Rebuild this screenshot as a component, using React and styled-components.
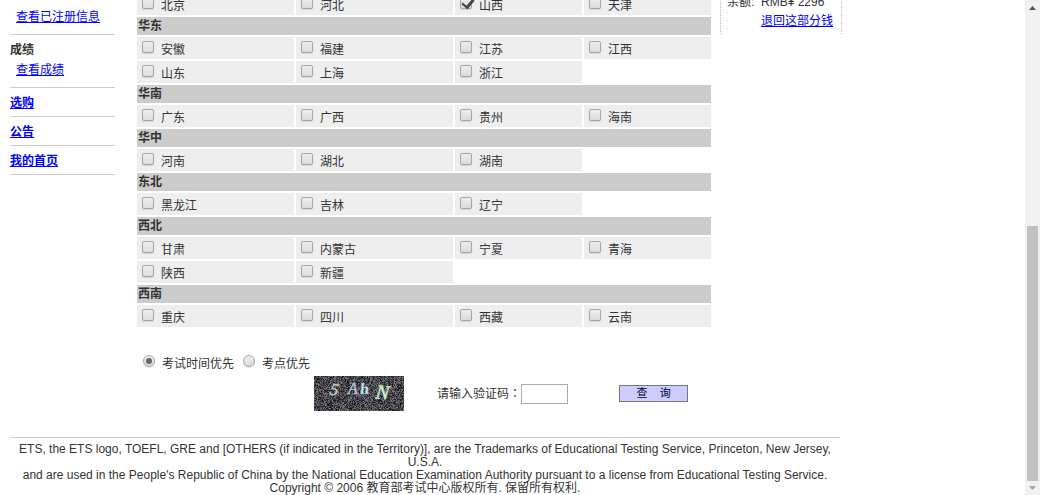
import React from "react";
import styled, { createGlobalStyle } from "styled-components";

const GlobalStyle = createGlobalStyle`
  * { box-sizing: border-box; }
  body {
    margin: 0;
    background: #fff;
    color: #333;
    font: 12px/20px "Liberation Sans", "Noto Sans CJK SC", sans-serif;
  }
  a { color: #00f; text-decoration: underline; }
`;

const Screen = styled.div`
  display: flex;
  height: 100vh;
  overflow: hidden;
`;

const Viewport = styled.div`
  flex: 1;
  min-width: 0;
  overflow: hidden;
`;

const Page = styled.div`
  max-width: 842px;
  margin-top: -9px;
  padding-left: 10px;
`;

const Columns = styled.div`
  display: grid;
  grid-template-columns: 105px minmax(0, 1fr) 122px;
`;

const Sidebar = styled.nav`
  padding-top: 11px;
`;

const MenuGroup = styled.div`
  padding: 5px 0 7px;
  border-bottom: 1px solid #ccc;
`;

const MenuTitle = styled.div`
  font-weight: bold;
`;

const SubLink = styled.a`
  display: block;
  padding-left: 6px;
`;

const MenuItem = styled.div`
  padding: 5px 0 3px;
  border-bottom: 1px solid #ccc;
  font-weight: bold;
`;

const Main = styled.main`
  margin: 0 7px 0 20px;
`;

const Regions = styled.table`
  width: 100%;
  table-layout: fixed;
  border-spacing: 2px;
`;

const Column = styled.col`
  width: ${(p) => (p.$narrow ? "127px" : "auto")};
`;

const RegionHead = styled.th`
  height: 18px;
  padding: 0 1px;
  background: #ccc;
  text-align: left;
  line-height: 18px;
`;

const City = styled.td`
  height: 22px;
  padding: 0;
  background: #eee;
`;

const Choice = styled.label`
  display: inline-flex;
  align-items: flex-start;
  height: 22px;
  line-height: 26px;
`;

const Tick = styled.input`
  appearance: none;
  position: relative;
  flex: none;
  width: 12px;
  height: 12px;
  margin: 4px 7px 0 5px;
  border: 1px solid #a6a6a6;
  border-radius: ${(p) => (p.type === "radio" ? "50%" : "2px")};
  background: linear-gradient(#eee, #dcdcdc);
  box-shadow: 0 1px 1px rgba(0, 0, 0, 0.12);

  &[type="radio"]:checked::after {
    content: "";
    position: absolute;
    inset: 2px;
    border-radius: 50%;
    background: #666;
  }
  &[type="checkbox"]:checked::after {
    content: "";
    position: absolute;
    left: 3px;
    top: -1px;
    width: 5px;
    height: 9px;
    border: solid #444;
    border-width: 0 3px 2px 0;
    transform: rotate(40deg);
  }
`;

const Search = styled.form`
  padding-top: 22px;
`;

const Priority = styled.div`
  display: flex;
  gap: 4px;
  padding-left: 3px;
`;

const CodeRow = styled.div`
  display: flex;
  align-items: center;
  margin-top: 3px;
  padding-left: 179px;
`;

const CaptchaImage = styled.svg`
  flex: none;
  width: 90px;
  height: 35px;
  margin-right: 33px;
`;

const CodeLabel = styled.label`
  white-space: nowrap;
`;

const CenteredColon = styled.span`
  font-family: "Noto Sans CJK TC", sans-serif;
`;

const CodeInput = styled.input`
  width: 47px;
  height: 20px;
  padding: 0 2px;
  border: 1px solid #a9a9a9;
  background: #fff;
  font: inherit;
`;

const SubmitButton = styled.button`
  width: 69px;
  height: 17px;
  margin-left: 51px;
  padding: 0;
  border: 1px solid #777;
  background: #ccf;
  color: #003;
  font: 11px/15px "Liberation Sans", "Noto Sans CJK SC", sans-serif;
  white-space: pre;
`;

const Account = styled.dl`
  display: grid;
  grid-template-columns: 34px 1fr;
  align-self: start;
  margin: 0;
  padding: 2px 0 3px 6px;
  border: dotted #bbb;
  border-width: 0 1px;
  line-height: 19px;
`;

const AccountCell = styled.dd`
  margin: 0;
  grid-column: 2;
`;

const Footer = styled.footer`
  margin: 26px 2px 0 0;
  padding-top: 5px;
  border-top: 1px solid #ccc;
  text-align: center;
  line-height: 13px;
`;

const ScrollBar = styled.div`
  display: flex;
  flex-direction: column;
  flex: none;
  width: 15px;
  background: #f1f1f1;
`;

const ScrollArrow = styled.svg`
  flex: none;
  width: 15px;
  height: 14px;
  fill: ${(p) => (p.$dim ? "#a3a3a3" : "#505050")};
`;

const ScrollTrack = styled.div`
  display: flex;
  flex-direction: column;
  justify-content: flex-end;
  flex: 1;
  padding: 0 2px;
`;

const ScrollThumb = styled.div`
  height: 54.6%;
  background: #c1c1c1;
`;

const regions = [
  { cities: [["北京", "河北", "山西", "天津"]] },
  { name: "华东", cities: [["安徽", "福建", "江苏", "江西"], ["山东", "上海", "浙江"]] },
  { name: "华南", cities: [["广东", "广西", "贵州", "海南"]] },
  { name: "华中", cities: [["河南", "湖北", "湖南"]] },
  { name: "东北", cities: [["黑龙江", "吉林", "辽宁"]] },
  { name: "西北", cities: [["甘肃", "内蒙古", "宁夏", "青海"], ["陕西", "新疆"]] },
  { name: "西南", cities: [["重庆", "四川", "西藏", "云南"]] },
];

const noiseColours = ["#151517", "#202024", "#303034", "#44444a", "#2c4a3a", "#6a4a68", "#40506e", "#75756f", "#85706c"];

function buildNoise() {
  const paths = noiseColours.map(() => "");
  let seed = 20063;
  for (let y = 0; y < 35; y += 1) {
    for (let x = 0; x < 90; x += 1) {
      seed = (seed * 48271) % 2147483647;
      paths[Math.floor((seed / 2147483647) * noiseColours.length)] += `M${x} ${y}h1v1h-1z`;
    }
  }
  return paths;
}

const noise = buildNoise();

function Captcha() {
  return (
    <CaptchaImage viewBox="0 0 90 35" role="img" aria-label="验证码">
      <g shapeRendering="crispEdges">
        {noise.map((d, i) => (
          <path key={noiseColours[i]} d={d} fill={noiseColours[i]} />
        ))}
      </g>
      <g fontFamily="Liberation Serif, serif" strokeWidth="0.5">
        <text x="16" y="19" fontSize="17" fontStyle="italic" fill="#c0c6c4" stroke="#c0c6c4" transform="rotate(10 20 14)">5</text>
        <text x="34" y="18" fontSize="16" fontStyle="italic" fill="#b4bed2" stroke="#b4bed2">A</text>
        <text x="46" y="18" fontSize="16" fontWeight="bold" fill="#bce4ef" transform="rotate(4 49 13)">h</text>
        <text x="62" y="23" fontSize="20" fontStyle="italic" fill="#c9efc8" stroke="#c9efc8" transform="rotate(6 69 15)">N</text>
      </g>
    </CaptchaImage>
  );
}

export default function App() {
  return (
    <>
      <GlobalStyle />
      <Screen>
        <Viewport>
          <Page>
            <Columns>
              <Sidebar>
                <MenuGroup>
                  <SubLink href="#info">查看已注册信息</SubLink>
                </MenuGroup>
                <MenuGroup>
                  <MenuTitle>成绩</MenuTitle>
                  <SubLink href="#scores">查看成绩</SubLink>
                </MenuGroup>
                <MenuItem><a href="#shop">选购</a></MenuItem>
                <MenuItem><a href="#news">公告</a></MenuItem>
                <MenuItem><a href="#home">我的首页</a></MenuItem>
              </Sidebar>
              <Main>
                <Regions>
                  <colgroup>
                    <Column />
                    <Column />
                    <Column $narrow />
                    <Column $narrow />
                  </colgroup>
                  {regions.map((region, i) => (
                    <tbody key={i}>
                      {region.name && (
                        <tr><RegionHead colSpan={4} scope="rowgroup">{region.name}</RegionHead></tr>
                      )}
                      {region.cities.map((row) => (
                        <tr key={row[0]}>
                          {row.map((city) => (
                            <City key={city}>
                              <Choice>
                                <Tick type="checkbox" name="city" value={city} defaultChecked={city === "山西"} />
                                {city}
                              </Choice>
                            </City>
                          ))}
                        </tr>
                      ))}
                    </tbody>
                  ))}
                </Regions>
                <Search onSubmit={(e) => e.preventDefault()}>
                  <Priority>
                    <Choice><Tick type="radio" name="priority" value="time" defaultChecked />考试时间优先</Choice>
                    <Choice><Tick type="radio" name="priority" value="site" />考点优先</Choice>
                  </Priority>
                  <CodeRow>
                    <Captcha />
                    <CodeLabel htmlFor="code">请输入验证码<CenteredColon>：</CenteredColon></CodeLabel>
                    <CodeInput id="code" type="text" />
                    <SubmitButton type="submit">{"查\u00a0\u00a0\u00a0\u00a0询"}</SubmitButton>
                  </CodeRow>
                </Search>
              </Main>
              <Account>
                <dt>余额:</dt>
                <AccountCell>RMB¥ 2296</AccountCell>
                <AccountCell><a href="#refund">退回这部分钱</a></AccountCell>
              </Account>
            </Columns>
            <Footer>
              ETS, the ETS logo, TOEFL, GRE and [OTHERS (if indicated in the Territory)], are the Trademarks of
              Educational Testing Service, Princeton, New Jersey, U.S.A.
              <br />
              and are used in the People's Republic of China by the National Education Examination Authority pursuant
              to a license from Educational Testing Service.
              <br />
              Copyright © 2006 教育部考试中心版权所有. 保留所有权利.
            </Footer>
          </Page>
        </Viewport>
        <ScrollBar aria-hidden="true">
          <ScrollArrow viewBox="0 0 15 14"><path d="M4 10L7.500 6L11 10z" /></ScrollArrow>
          <ScrollTrack><ScrollThumb /></ScrollTrack>
          <ScrollArrow $dim viewBox="0 0 15 14"><path d="M4 5L7.500 9L11 5z" /></ScrollArrow>
        </ScrollBar>
      </Screen>
    </>
  );
}
